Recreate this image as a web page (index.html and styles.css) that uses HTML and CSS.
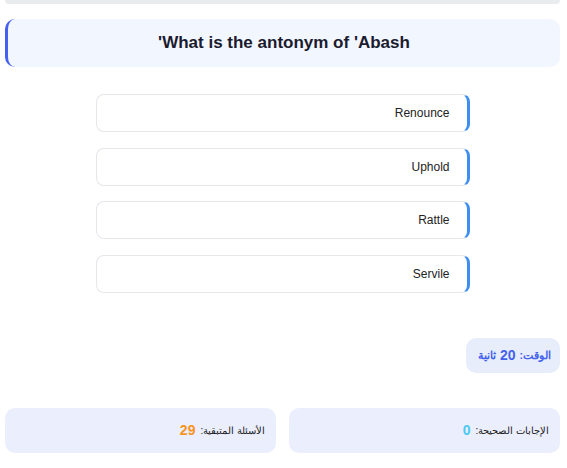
FILE: index.html
```html
<!DOCTYPE html>
<html lang="ar" dir="rtl">
<head>
    <meta charset="utf-8">
    <title>Quiz</title>
    <link rel="stylesheet" href="styles.css">
</head>
<body>
    <div class="quiz">
        <div class="progress"><div class="progress-fill" style="width: 0%;"></div></div>

        <div class="question-card">
            <h2 class="question">What is the antonym of 'Abash'</h2>
        </div>

        <div class="options">
            <button class="option">Renounce</button>
            <button class="option">Uphold</button>
            <button class="option">Rattle</button>
            <button class="option">Servile</button>
        </div>

        <div class="timer-row">
            <div class="timer">الوقت: <span id="time">20</span> ثانية</div>
        </div>

        <div class="stats">
            <div class="stat-box">الإجابات الصحيحة: <span class="correct">0</span></div>
            <div class="stat-box">الأسئلة المتبقية: <span class="remaining">29</span></div>
        </div>
    </div>
</body>
</html>
```

FILE: styles.css
```css
body {
    margin: 0;
    font-family: "Liberation Sans", Arial, sans-serif;
    background-color: #fff;
    color: #222;
}

.quiz {
    padding: 0 7px 0 5px;
}

/* progress bar at the top */
.progress {
    height: 4px;
    background-color: #e9ecef;
    border-radius: 0 0 4px 4px;
    overflow: hidden;
}
.progress-fill {
    height: 100%;
    background-color: #4361ee;
}

/* question card */
.question-card {
    margin-top: 15px;
    height: 48px;
    display: flex;
    align-items: center;
    justify-content: center;
    background-color: #f2f6fe;
    border-left: 3px solid #4361ee;
    border-radius: 10px;
    box-sizing: border-box;
}
.question {
    margin: 0;
    font-size: 17px;
    font-weight: bold;
    color: #1b1b2f;
}

/* answer options */
.options {
    width: 374px;
    margin: 27px auto 0;
    display: flex;
    flex-direction: column;
    gap: 15.5px;
}
.option {
    height: 38px;
    padding: 0 17px 0 10px;
    font-family: inherit;
    font-size: 12px;
    color: #222;
    text-align: right;
    background-color: #fff;
    border: 1px solid #e5e7eb;
    border-right: 3px solid #3d8ef0;
    border-radius: 8px;
    box-sizing: border-box;
}

/* timer */
.timer-row {
    display: flex;
    margin-top: 45px;
}
.timer {
    height: 35px;
    display: flex;
    align-items: center;
    gap: 4px;
    padding: 0 9px 0 12px;
    background-color: #e8edfc;
    border-radius: 10px;
    font-size: 10.5px;
    font-weight: bold;
    color: #4361ee;
    box-sizing: border-box;
}
.timer span {
    font-size: 14px;
}

/* score boxes */
.stats {
    margin-top: 35px;
    display: grid;
    grid-template-columns: 1fr 1fr;
    gap: 13px;
}
.stat-box {
    height: 45px;
    display: flex;
    align-items: center;
    gap: 5px;
    padding: 0 11px;
    background-color: #ebeefc;
    border-radius: 10px;
    font-size: 10px;
    color: #222;
    box-sizing: border-box;
}
.stat-box span {
    font-size: 14px;
    font-weight: bold;
}
.correct {
    color: #4cc9f0;
}
.remaining {
    color: #f7931e;
}
```
